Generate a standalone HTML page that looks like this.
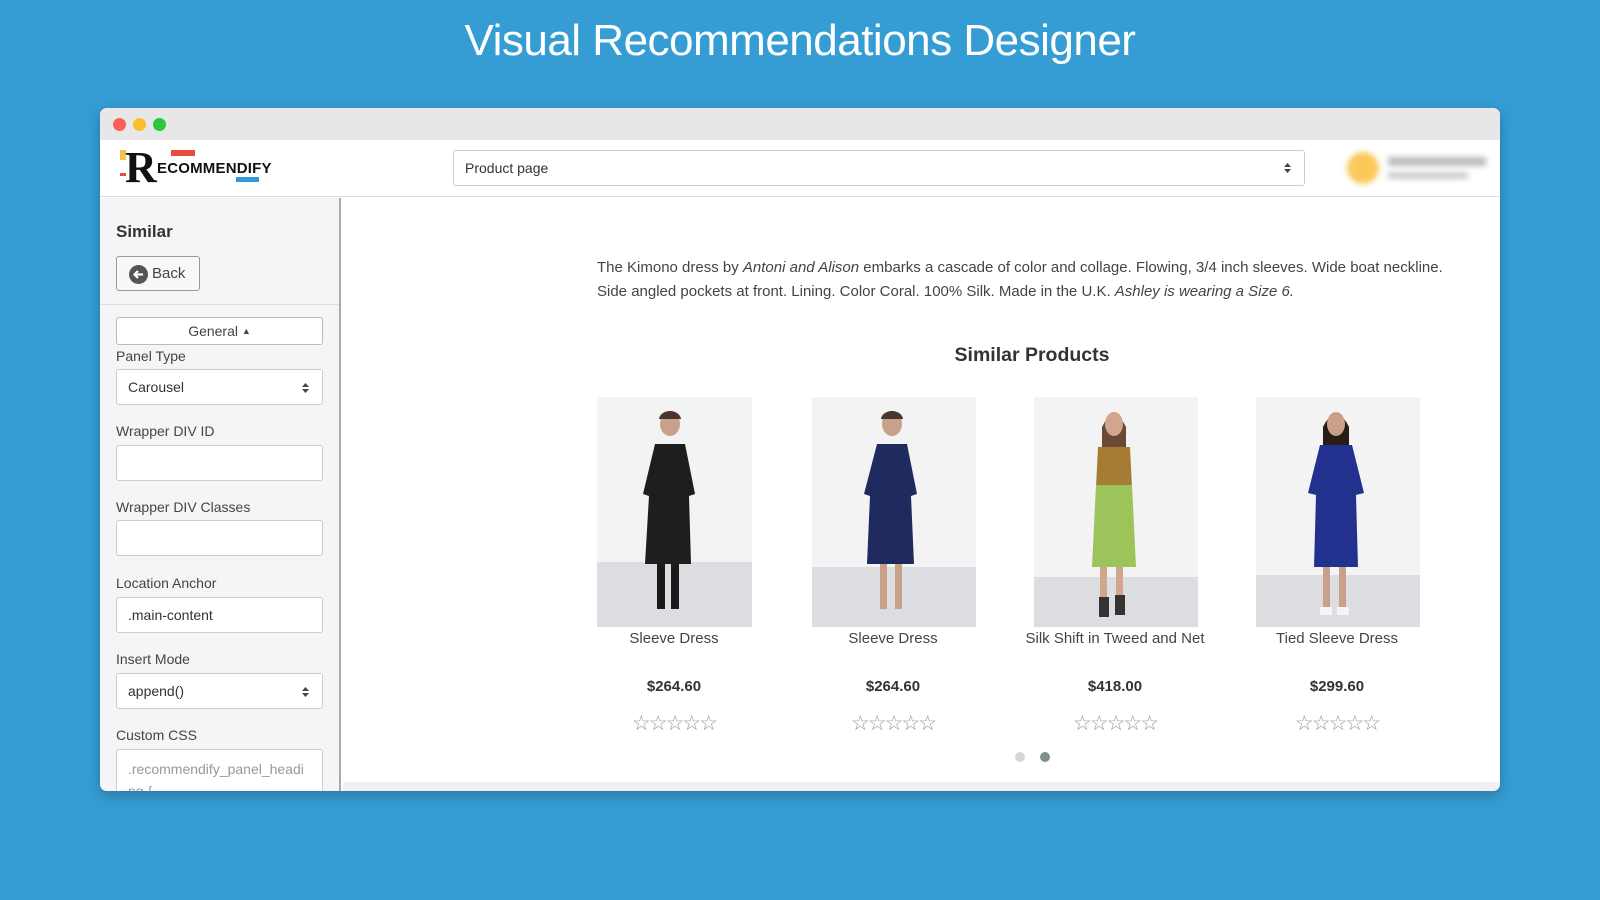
<!DOCTYPE html>
<html><head><meta charset="utf-8"><style>
*{margin:0;padding:0;box-sizing:border-box}
body{width:1600px;height:900px;background:#359dd3;font-family:"Liberation Sans",sans-serif;position:relative;overflow:hidden;color:#333}
.abs{position:absolute}
h1{position:absolute;top:16px;left:0;width:1600px;text-align:center;color:#fff;font-weight:400;font-size:44px;font-family:"Liberation Sans",sans-serif;letter-spacing:-0.5px}
.win{position:absolute;left:100px;top:108px;width:1400px;height:683px;background:#fff;border-radius:7px;overflow:hidden;box-shadow:0 4px 14px rgba(0,0,0,.25)}
.tb{height:32px;background:#e7e7e7;position:relative}
.dot{position:absolute;top:10px;width:13px;height:13px;border-radius:50%}
.hdr{position:absolute;top:32px;left:0;width:1400px;height:57px;border-bottom:1px solid #ddd;background:#fff}
.side{position:absolute;left:0;top:90px;width:241px;height:593px;background:#f5f5f5;border-right:2px solid #aaa}
.lbl{position:absolute;left:16px;font-size:14px;color:#444}
.inp{position:absolute;left:16px;width:207px;height:36px;background:#fff;border:1px solid #ccc;border-radius:3px;font-size:14px;color:#333;padding:0 11px;line-height:34px}
.arr{position:absolute;right:13px;top:12px;width:7px;height:12px}
.name{position:absolute;width:220px;text-align:center;font-size:15px;color:#444}
.price{position:absolute;width:220px;text-align:center;font-size:15px;font-weight:bold;color:#333}
.stars{position:absolute;width:220px;text-align:center;font-size:21px;color:#999;letter-spacing:-2px}
</style></head><body>
<h1>Visual Recommendations Designer</h1>
<div class="win">
 <div class="tb">
  <div class="dot" style="left:13px;background:#fc5f57"></div>
  <div class="dot" style="left:33px;background:#fdbc2e"></div>
  <div class="dot" style="left:53px;background:#28c840"></div>
 </div>
 <div class="hdr">
  <div class="abs" style="left:20px;top:10px;width:6px;height:10px;background:#f2c14e"></div>
  <div class="abs" style="left:20px;top:33px;width:6px;height:3px;background:#e74c3c"></div>
  <div class="abs" style="left:71px;top:10px;width:24px;height:6px;background:#e74c3c"></div>
  <div class="abs" style="left:136px;top:37px;width:23px;height:5px;background:#3498db"></div>
  <div class="abs" style="left:25px;top:8px;font-family:'Liberation Serif',serif;font-weight:bold;font-size:44px;line-height:40px;color:#111">R</div>
  <div class="abs" style="left:57px;top:20px;font-weight:bold;font-size:15px;color:#111;letter-spacing:0.2px">ECOMMENDIFY</div>
  <div class="abs" style="left:353px;top:10px;width:852px;height:36px;border:1px solid #ccc;border-radius:3px;font-size:14px;line-height:34px;padding-left:11px;color:#333">Product page
   <svg class="arr" viewBox="0 0 7 12" style="top:11px"><path d="M0 5L3.5 1 7 5zM0 7l3.5 4L7 7z" fill="#444"/></svg></div>
  <div class="abs" style="left:1247px;top:12px;width:32px;height:32px;border-radius:50%;background:#fbc85a;filter:blur(3px)"></div>
  <div class="abs" style="left:1288px;top:17px;width:98px;height:9px;background:#bbb;filter:blur(3px)"></div>
  <div class="abs" style="left:1288px;top:32px;width:80px;height:7px;background:#ccc;filter:blur(3px)"></div>
 </div>
 <div class="side">
  <div class="abs" style="left:16px;top:24px;font-size:17px;font-weight:bold;color:#333">Similar</div>
  <div class="abs" style="left:16px;top:58px;width:84px;height:35px;border:1px solid #999;border-radius:3px;background:#f8f8f8;font-size:15px;line-height:33px;padding-left:35px;color:#444">Back
   <svg class="abs" style="left:12px;top:8px" width="19" height="19" viewBox="0 0 19 19"><circle cx="9.5" cy="9.5" r="9.5" fill="#555"/><path d="M14 9.5H6M9 6L5.5 9.5 9 13" stroke="#fff" stroke-width="2.2" fill="none"/></svg></div>
  <div class="abs" style="left:0;top:106px;width:239px;height:1px;background:#ddd"></div>
  <div class="abs" style="left:16px;top:119px;width:207px;height:28px;background:#fff;border:1px solid #bbb;border-radius:3px;font-size:14px;line-height:26px;text-align:center;color:#444">General <span style="font-size:9px;position:relative;top:-2px">&#9650;</span></div>
  <div class="lbl" style="top:150px">Panel Type</div>
  <div class="inp" style="top:171px">Carousel<svg class="arr" viewBox="0 0 7 12"><path d="M0 5L3.5 1 7 5zM0 7l3.5 4L7 7z" fill="#444"/></svg></div>
  <div class="lbl" style="top:225px">Wrapper DIV ID</div>
  <div class="inp" style="top:247px"></div>
  <div class="lbl" style="top:301px">Wrapper DIV Classes</div>
  <div class="inp" style="top:322px"></div>
  <div class="lbl" style="top:377px">Location Anchor</div>
  <div class="inp" style="top:399px">.main-content</div>
  <div class="lbl" style="top:453px">Insert Mode</div>
  <div class="inp" style="top:475px">append()<svg class="arr" viewBox="0 0 7 12"><path d="M0 5L3.5 1 7 5zM0 7l3.5 4L7 7z" fill="#444"/></svg></div>
  <div class="lbl" style="top:529px">Custom CSS</div>
  <div class="inp" style="top:551px;height:60px;color:#999;line-height:22px;padding-top:8px;overflow:hidden">.recommendify_panel_headi ng {</div>
 </div>
 <div class="abs" style="left:243px;top:674px;width:1157px;height:9px;background:#f1f1f3"></div>
 <div class="abs" style="left:497px;top:148px;width:860px;font-size:15px;line-height:24px;color:#444">The Kimono dress by <i>Antoni and Alison</i> embarks a cascade of color and collage. Flowing, 3/4 inch sleeves. Wide boat neckline. Side angled pockets at front. Lining. Color Coral. 100% Silk. Made in the U.K. <i>Ashley is wearing a Size 6.</i></div>
 <div class="abs" style="left:732px;top:236px;width:400px;text-align:center;font-size:19.5px;font-weight:bold;color:#333">Similar Products</div>

 <svg class="abs" style="left:497px;top:289px" width="155" height="230" viewBox="0 0 155 230"><rect width="155" height="230" fill="#f3f3f3"/><rect y="165" width="155" height="65" fill="#dcdde0"/><ellipse cx="73" cy="27" rx="10" ry="12" fill="#c9a08a"/><path d="M73 14a11 9 0 0 0-11 8h22a11 9 0 0 0-11-8z" fill="#4a362c"/><path d="M58 47h30l10 50-6 2 2 68H48l4-68-6-2z" fill="#1e1e1e"/><rect x="60" y="167" width="8" height="45" fill="#1a1a1a"/><rect x="74" y="167" width="8" height="45" fill="#1a1a1a"/></svg>
 <svg class="abs" style="left:712px;top:289px" width="164" height="230" viewBox="0 0 164 230"><rect width="164" height="230" fill="#f3f3f3"/><rect y="170" width="164" height="60" fill="#dcdde0"/><ellipse cx="80" cy="27" rx="10" ry="12" fill="#c9a08a"/><path d="M80 14a11 9 0 0 0-11 8h22a11 9 0 0 0-11-8z" fill="#4a362c"/><path d="M65 47h30l10 50-6 2 3 68H55l3-68-6-2z" fill="#1f2a5e"/><rect x="68" y="167" width="7" height="45" fill="#c9a08a"/><rect x="83" y="167" width="7" height="45" fill="#c9a08a"/></svg>
 <svg class="abs" style="left:934px;top:289px" width="164" height="230" viewBox="0 0 164 230"><rect width="164" height="230" fill="#f3f3f3"/><rect y="180" width="164" height="50" fill="#dcdde0"/><path d="M68 30q12-24 24 0v30H68z" fill="#6b4a34"/><ellipse cx="80" cy="27" rx="9" ry="12" fill="#d2a68c"/><path d="M64 50h32l2 40H62z" fill="#a67c35"/><path d="M62 88h36l4 82H58z" fill="#9cc45a"/><rect x="66" y="170" width="7" height="45" fill="#d2a68c"/><rect x="82" y="170" width="7" height="45" fill="#d2a68c"/><rect x="65" y="200" width="10" height="20" fill="#333"/><rect x="81" y="198" width="10" height="20" fill="#333"/></svg>
 <svg class="abs" style="left:1156px;top:289px" width="164" height="230" viewBox="0 0 164 230"><rect width="164" height="230" fill="#f3f3f3"/><rect y="178" width="164" height="52" fill="#dcdde0"/><path d="M67 30q13-26 26 0v22H67z" fill="#2a1d18"/><ellipse cx="80" cy="27" rx="9" ry="12" fill="#c9a08a"/><path d="M64 48h32l12 48-8 2 2 72H58l2-72-8-2z" fill="#22318e"/><rect x="67" y="170" width="7" height="42" fill="#c9a08a"/><rect x="83" y="170" width="7" height="42" fill="#c9a08a"/><rect x="64" y="210" width="12" height="8" fill="#f5f5f5"/><rect x="81" y="210" width="12" height="8" fill="#f5f5f5"/></svg>

 <div class="name" style="left:464px;top:522px">Sleeve Dress</div>
 <div class="name" style="left:683px;top:522px">Sleeve Dress</div>
 <div class="name" style="left:905px;top:522px">Silk Shift in Tweed and Net</div>
 <div class="name" style="left:1127px;top:522px">Tied Sleeve Dress</div>
 <div class="price" style="left:464px;top:570px">$264.60</div>
 <div class="price" style="left:683px;top:570px">$264.60</div>
 <div class="price" style="left:905px;top:570px">$418.00</div>
 <div class="price" style="left:1127px;top:570px">$299.60</div>
 <div class="stars" style="left:464px;top:603px">☆☆☆☆☆</div>
 <div class="stars" style="left:683px;top:603px">☆☆☆☆☆</div>
 <div class="stars" style="left:905px;top:603px">☆☆☆☆☆</div>
 <div class="stars" style="left:1127px;top:603px">☆☆☆☆☆</div>
 <div class="abs" style="left:915px;top:644px;width:10px;height:10px;border-radius:50%;background:#d6d6d6"></div>
 <div class="abs" style="left:940px;top:644px;width:10px;height:10px;border-radius:50%;background:#7f8f8a"></div>
</div>
</body></html>
